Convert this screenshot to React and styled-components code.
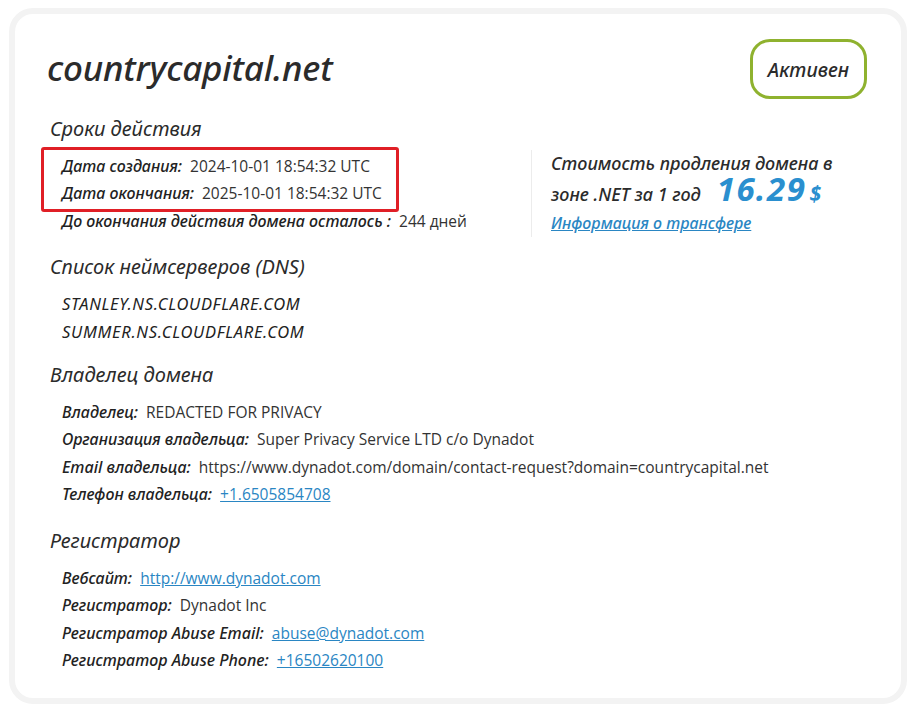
import React from 'react'
import styled, { createGlobalStyle } from 'styled-components'

const GlobalStyle = createGlobalStyle`
  body {
    margin: 0;
    background: #ffffff;
    font-family: "Noto Sans", "Open Sans", sans-serif;
    color: #222;
  }
`

const Page = styled.div`
  padding: 8px 13px 16px 9px;
`

const Card = styled.div`
  border: 6px solid #f3f3f3;
  border-radius: 24px;
  padding: 22px 32px 24px 32px;
  background: #fff;
`

const Header = styled.div`
  display: flex;
  justify-content: space-between;
  align-items: flex-start;
`

const Title = styled.h1`
  margin: 12px 0 0 0;
  font-size: 35px;
  line-height: 40px;
  font-style: italic;
  font-weight: 500;
  color: #2b2b2b;
  letter-spacing: -0.2px;
`

const Badge = styled.div`
  margin-top: 3px;
  margin-right: 2px;
  padding: 0 15px;
  height: 54px;
  display: flex;
  align-items: center;
  border: 3px solid #8fb22f;
  border-radius: 20px;
  font-size: 19.5px;
  font-style: italic;
  font-weight: 500;
  color: #2b2b2b;
`

const Top = styled.div`
  display: flex;
  align-items: flex-start;
  margin-top: 16px;
`

const Left = styled.div`
  width: 484px;
`

const Divider = styled.div`
  width: 1px;
  height: 87px;
  background: #ececec;
  margin: 35px 19px 0 0;
`

const Price = styled.div`
  margin-top: 33px;
  font-size: 18px;
  font-style: italic;
  font-weight: 500;
  color: #2b2b2b;
  line-height: 31px;
`

const Amount = styled.span`
  font-size: 33px;
  line-height: 20px;
  font-weight: 700;
  letter-spacing: 1.5px;
  color: #2a8fcf;
  margin-left: 16px;
`

const Dollar = styled.span`
  font-size: 21px;
  line-height: 20px;
  font-weight: 700;
  color: #2a8fcf;
  margin-left: 3px;
`

const Link = styled.a`
  color: #2a86c3;
  text-decoration: underline;
  cursor: pointer;
`

const PriceLink = styled(Link)`
  display: block;
  margin-top: 2px;
  font-size: 16px;
  line-height: 22px;
`

const Heading = styled.h2`
  margin: ${(p) => p.$top || 0}px 0 9px 3px;
  font-size: 20px;
  font-style: italic;
  font-weight: 400;
  color: #2b2b2b;
  line-height: 28px;
`

const Rows = styled.div`
  padding-left: 15px;
`

const Highlight = styled.div`
  border: 3px solid #e01f26;
  border-radius: 3px;
  margin: -5px 0 -5px -21px;
  padding: 2px 0 2px 18px;
  width: 358px;
  box-sizing: border-box;
`

const Row = styled.div`
  height: 27.5px;
  display: flex;
  align-items: center;
  font-size: 16px;
  white-space: nowrap;
`

const Label = styled.span`
  font-style: italic;
  font-weight: 500;
  color: #222;
  margin-right: 8px;
`

const Value = styled.span`
  font-family: "Open Sans", sans-serif;
  font-size: 15.5px;
  color: #333;
`

const LinkValue = styled(Link)`
  font-family: "Open Sans", sans-serif;
  font-size: 15.5px;
`

const Server = styled(Row)`
  font-size: 16.5px;
  letter-spacing: 0.7px;
  font-style: italic;
  font-weight: 400;
  color: #222;
`

function Item({ label, children, link }) {
  return (
    <Row>
      <Label>{label}</Label>
      {link ? <LinkValue>{children}</LinkValue> : <Value>{children}</Value>}
    </Row>
  )
}

export default function App() {
  return (
    <Page>
      <GlobalStyle />
      <Card>
        <Header>
          <Title>countrycapital.net</Title>
          <Badge>Активен</Badge>
        </Header>

        <Top>
          <Left>
            <Heading>Сроки действия</Heading>
            <Rows>
              <Highlight>
                <Item label="Дата создания:">2024-10-01 18:54:32 UTC</Item>
                <Item label="Дата окончания:">2025-10-01 18:54:32 UTC</Item>
              </Highlight>
              <Item label="До окончания действия домена осталось :">244 дней</Item>
            </Rows>
          </Left>
          <Divider />
          <Price>
            Стоимость продления домена в
            <br />
            зоне .NET за 1 год
            <Amount>16.29</Amount>
            <Dollar>$</Dollar>
            <PriceLink>Информация о трансфере</PriceLink>
          </Price>
        </Top>

        <Heading $top={16}>Список неймсерверов (DNS)</Heading>
        <Rows>
          <Server>STANLEY.NS.CLOUDFLARE.COM</Server>
          <Server>SUMMER.NS.CLOUDFLARE.COM</Server>
        </Rows>

        <Heading $top={16}>Владелец домена</Heading>
        <Rows>
          <Item label="Владелец:">REDACTED FOR PRIVACY</Item>
          <Item label="Организация владельца:">Super Privacy Service LTD c/o Dynadot</Item>
          <Item label="Email владельца:">
            https://www.dynadot.com/domain/contact-request?domain=countrycapital.net
          </Item>
          <Item label="Телефон владельца:" link>+1.6505854708</Item>
        </Rows>

        <Heading $top={19}>Регистратор</Heading>
        <Rows>
          <Item label="Вебсайт:" link>http://www.dynadot.com</Item>
          <Item label="Регистратор:">Dynadot Inc</Item>
          <Item label="Регистратор Abuse Email:" link>abuse@dynadot.com</Item>
          <Item label="Регистратор Abuse Phone:" link>+16502620100</Item>
        </Rows>
      </Card>
    </Page>
  )
}
